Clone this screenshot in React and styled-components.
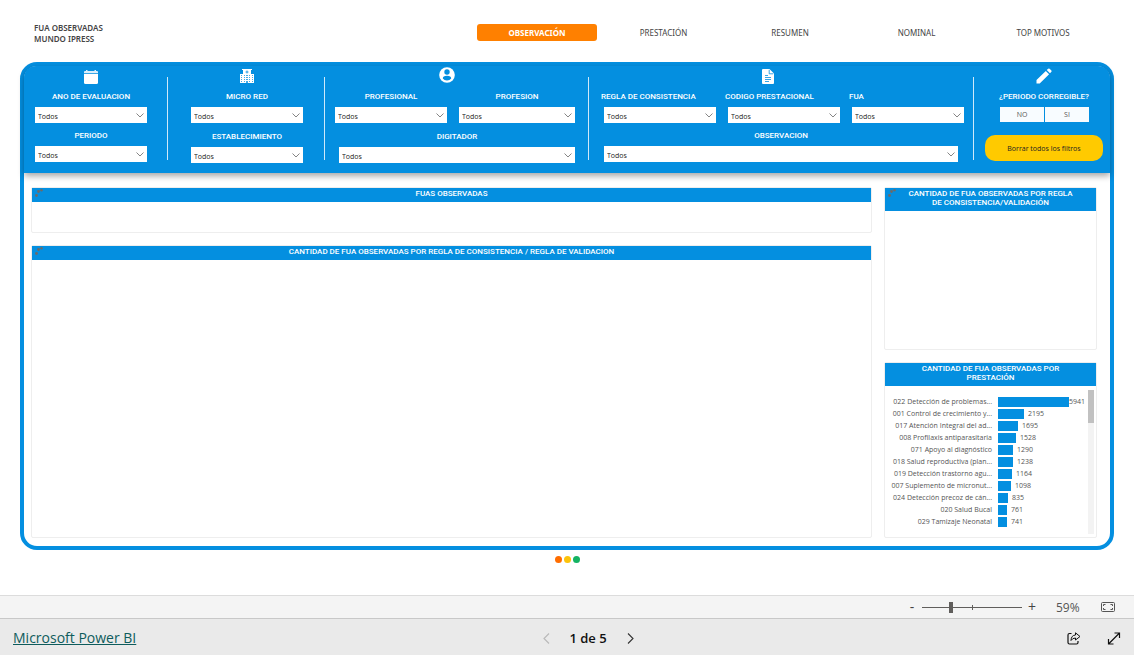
import { useState } from "react"
import styled, { createGlobalStyle } from "styled-components"

const BLUE = "#048fe0"

const todos = ["Todos"]

const prestaciones = [
  { name: "022 Detección de problemas...", total: 5941 },
  { name: "001 Control de crecimiento y...", total: 2195 },
  { name: "017 Atención Integral del ad...", total: 1695 },
  { name: "008 Profilaxis antiparasitaria", total: 1528 },
  { name: "071 Apoyo al diagnóstico", total: 1290 },
  { name: "018 Salud reproductiva (plan...", total: 1238 },
  { name: "019 Detección trastorno agu...", total: 1164 },
  { name: "007 Suplemento de micronut...", total: 1098 },
  { name: "024 Detección precoz de cán...", total: 835 },
  { name: "020 Salud Bucal", total: 761 },
  { name: "029 Tamizaje Neonatal", total: 741 }
]

const maxTotal = prestaciones[0].total

const tabs = ["OBSERVACIÓN", "PRESTACIÓN", "RESUMEN", "NOMINAL", "TOP MOTIVOS"]

export default function App() {
  const [tab, setTab] = useState(tabs[0])
  const [zoom, setZoom] = useState(59)

  return (
    <Page>
      <GlobalStyle />
      <Report>
        <Header>
          <Title>
            FUA OBSERVADAS
            <br />
            MUNDO IPRESS
          </Title>
          <Tabs>
            {tabs.map(t => (
              <Tab key={t} $active={t === tab} onClick={() => setTab(t)}>
                {t}
              </Tab>
            ))}
          </Tabs>
        </Header>
        <Card>
          <Filters />
          <Board>
            <Column>
              <Panel>
                <PanelTitle>
                  FUAS OBSERVADAS
                  <DrillMark />
                </PanelTitle>
                <PanelBody $height={30} />
              </Panel>
              <Panel $grow>
                <PanelTitle>
                  CANTIDAD DE FUA OBSERVADAS POR REGLA DE CONSISTENCIA / REGLA
                  DE VALIDACION
                  <DrillMark />
                </PanelTitle>
                <PanelBody $height={277} />
              </Panel>
            </Column>
            <Column>
              <Panel>
                <PanelTitle>
                  CANTIDAD DE FUA OBSERVADAS POR REGLA
                  <br />
                  DE CONSISTENCIA/VALIDACIÓN
                  <DrillMark />
                </PanelTitle>
                <PanelBody $height={138} />
              </Panel>
              <Panel $grow>
                <PanelTitle>
                  CANTIDAD DE FUA OBSERVADAS POR
                  <br />
                  PRESTACIÓN
                </PanelTitle>
                <PanelBody $height={151}>
                  <Chart />
                </PanelBody>
              </Panel>
            </Column>
          </Board>
        </Card>
        <Dots>
          <Dot $color="#ff6d00" />
          <Dot $color="#fcc30b" />
          <Dot $color="#14b363" />
        </Dots>
      </Report>
      <ZoomBar>
        <ZoomStep
          aria-label="Alejar"
          onClick={() => setZoom(Math.max(10, zoom - 10))}
        >
          -
        </ZoomStep>
        <ZoomRange
          type="range"
          aria-label="Zoom"
          min="36"
          max="118"
          value={zoom}
          onChange={e => setZoom(Number(e.target.value))}
        />
        <ZoomStep
          aria-label="Acercar"
          onClick={() => setZoom(Math.min(400, zoom + 10))}
        >
          +
        </ZoomStep>
        <ZoomValue>{zoom}%</ZoomValue>
        <IconButton aria-label="Ajustar a la página">
          <FitIcon />
        </IconButton>
      </ZoomBar>
      <Footer>
        <Brand href="#">Microsoft Power BI</Brand>
        <Pager>
          <IconButton aria-label="Página anterior" disabled>
            <Arrow d="M8 1.500 3 6.500l5 5" color="#b8b8b8" />
          </IconButton>
          <PageLabel>1 de 5</PageLabel>
          <IconButton aria-label="Página siguiente">
            <Arrow d="m3 1.500 5 5-5 5" color="#333" />
          </IconButton>
        </Pager>
        <FooterTools>
          <IconButton aria-label="Compartir">
            <ShareIcon />
          </IconButton>
          <IconButton aria-label="Pantalla completa">
            <FullIcon />
          </IconButton>
        </FooterTools>
      </Footer>
    </Page>
  )
}

const Filters = () => (
  <FilterBar>
    <Group $left={11} $right={20}>
      <GroupIcon>
        <CalendarIcon />
      </GroupIcon>
      <Field id="ano" label="ANO DE EVALUACION" />
      <Field id="periodo" label="PERIODO" />
    </Group>
    <Divider />
    <Group $left={23} $right={21} $gap={1}>
      <GroupIcon>
        <HospitalIcon />
      </GroupIcon>
      <Field id="red" label="MICRO RED" />
      <Field id="establecimiento" label="ESTABLECIMIENTO" />
    </Group>
    <Divider />
    <Group $left={10} $right={13} $gap={1}>
      <GroupIcon $shift={16}>
        <UserIcon />
      </GroupIcon>
      <FieldRow $gap={12}>
        <Field id="profesional" label="PROFESIONAL" size={112} />
        <Field id="profesion" label="PROFESION" size={116} />
      </FieldRow>
      <Field id="digitador" label="DIGITADOR" left={4} />
    </Group>
    <Divider />
    <Group $left={12} $right={9}>
      <GroupIcon $shift={30}>
        <DocumentIcon />
      </GroupIcon>
      <FieldRow $gap={9}>
        <Field id="regla" label="REGLA DE CONSISTENCIA" start left={3} />
        <Field id="codigo" label="CODIGO PRESTACIONAL" start left={3} />
        <Field id="fua" label="FUA" start left={3} />
      </FieldRow>
      <Field id="observacion" label="OBSERVACION" left={3} right={6} />
    </Group>
    <Divider />
    <Group $left={11} $right={7}>
      <GroupIcon>
        <PencilIcon />
      </GroupIcon>
      <Question>¿PERIODO CORREGIBLE?</Question>
      <Choices>
        <Choice type="button">NO</Choice>
        <Choice type="button">SI</Choice>
      </Choices>
      <ClearButton type="reset">Borrar todos los filtros</ClearButton>
    </Group>
  </FilterBar>
)

const Field = ({ id, label, start, left, right, size }) => (
  <FieldBox $left={left} $right={right} $size={size}>
    <FieldLabel htmlFor={id} $start={start}>
      {label}
    </FieldLabel>
    <SelectBox>
      <Select id={id}>
        {todos.map(o => (
          <option key={o}>{o}</option>
        ))}
      </Select>
      <Chevron viewBox="0 0 8 5">
        <path d="M.5.5 4 4 7.500.5" fill="none" stroke="#666" strokeWidth=".8" />
      </Chevron>
    </SelectBox>
  </FieldBox>
)

const Chart = () => (
  <ChartBox>
    <Rows>
      {prestaciones.map(p => (
        <Row key={p.name}>
          <RowName>{p.name}</RowName>
          <RowTrack>
            <Bar style={{ width: Math.round((p.total / maxTotal) * 71) }} />
            <BarGap />
            <RowValue>{p.total}</RowValue>
          </RowTrack>
        </Row>
      ))}
    </Rows>
    <Scroll>
      <Thumb />
    </Scroll>
  </ChartBox>
)

/* - - - Icons - - - */

const CalendarIcon = () => (
  <svg width="14" height="14" viewBox="0 0 14 14" fill="#fff">
    <path d="M0 3.200V2Q0 1 1 1h1V0h1.500v1h7V0H12v1h1q1 0 1 1v1.200z" fillOpacity=".85" />
    <path d="M0 4h14v8.500Q14 14 12.500 14h-11Q0 14 0 12.500z" />
  </svg>
)

const HospitalIcon = () => (
  <svg width="14" height="14" viewBox="0 0 14 14">
    <path d="M2 0h10v1h-1v4h3v9H0V5h3V1H2z" fill="#fff" />
    <path
      d="M1 6h1v1H1zM1 8h1v1H1zM1 10h1v1H1zM1 12h1v1H1zM12 6h1v1h-1zM12 8h1v1h-1zM12 10h1v1h-1zM12 12h1v1h-1zM4 6h1v1H4zM4 8h1v1H4zM4 10h1v1H4zM4 12h1v1H4zM9 6h1v1H9zM9 8h1v1H9zM9 10h1v1H9zM9 12h1v1H9zM6 6h2v1H6zM6 8h2v1H6zM6 10h2v1H6zM6 12h2v2H6z"
      fill={BLUE}
      fillOpacity=".75"
    />
    <path d="M7 1.500v3M5.500 3h3" stroke={BLUE} strokeWidth=".8" />
  </svg>
)

const UserIcon = () => (
  <svg width="16" height="16" viewBox="0 0 16 16">
    <circle cx="8" cy="8" r="7.800" fill="#fff" />
    <circle cx="8" cy="5" r="2.700" fill={BLUE} />
    <path d="M3.800 11.500Q3.800 8.800 8 8.800t4.200 2.700Q10.800 13.600 8 13.600t-4.200-2.100z" fill={BLUE} />
  </svg>
)

const DocumentIcon = () => (
  <svg width="12" height="15" viewBox="0 0 12 15">
    <path d="M0 1Q0 0 1 0h6.500L12 4.500V14q0 1-1 1H1q-1 0-1-1z" fill="#fff" />
    <path
      d="M7.200.8v4h4M3 6.500h3M3 8.500h6M3 10.500h6M3 12.500h4"
      fill="none"
      stroke={BLUE}
      strokeWidth=".8"
    />
  </svg>
)

const PencilIcon = () => (
  <svg width="16" height="16" viewBox="0 0 16 16" fill="#fff">
    <path d="M.5 15.500V12L9.800 3l3.300 3.200-9.400 9.300zM10.700 2.100 12.200.7q.7-.6 1.400 0l1.800 1.800q.5.700 0 1.300L14 5.300z" />
  </svg>
)

const DrillMark = () => (
  <Mark viewBox="0 0 8 8" fill="#6e6a68">
    <circle cx="1.500" cy="6.500" r="1.400" />
    <circle cx="3.500" cy="2.500" r="1.400" />
    <circle cx="6.500" cy="1.200" r="1.200" />
  </Mark>
)

const Arrow = ({ d, color }) => (
  <svg width="10" height="13" viewBox="0 0 10 13">
    <path d={d} fill="none" stroke={color} strokeWidth="1.100" />
  </svg>
)

const FitIcon = () => (
  <svg width="14" height="10" viewBox="0 0 14 10" fill="none" stroke="#555">
    <rect x=".5" y=".5" width="13" height="9" rx="1" />
    <path d="M2.500 4V2.500H4.500M9.500 2.500h2V4M2.500 6v1.500h2M9.500 7.500h2V6" />
  </svg>
)

const ShareIcon = () => (
  <svg width="14" height="13" viewBox="0 0 14 13" fill="none" stroke="#111">
    <path d="M4.500 1.500H2.500q-1.500 0-1.500 1.500v7.500Q1 12 2.500 12h7q1.500 0 1.500-1.500V9" strokeWidth="1.200" />
    <path d="M8.500.8 13 4.500 8.500 8V6Q5.500 6 4 8.500 4.200 3.300 8.500 3z" />
  </svg>
)

const FullIcon = () => (
  <svg width="14" height="13" viewBox="0 0 14 13" fill="none" stroke="#111">
    <path d="M1.500 12 12.500 1M7.500 1h5v5M1.500 7v5h5" strokeWidth="1.200" />
  </svg>
)

/* - - - Page - - - */

const GlobalStyle = createGlobalStyle`
  * {
    box-sizing: border-box;
  }
  body {
    margin: 0;
    background: #fff;
    font-family: "Open Sans", "Noto Sans", sans-serif;
  }
  button, select, input {
    font-family: inherit;
    margin: 0;
  }
  svg {
    display: block;
  }
`

const Page = styled.div`
  min-height: 100vh;
  display: flex;
  flex-direction: column;
`

const Report = styled.main`
  flex: 1;
  padding: 0 20px;
`

const Header = styled.header`
  height: 62px;
  display: flex;
  justify-content: space-between;
  padding: 22px 11px 0 14px;
  font-family: "Noto Sans", sans-serif;
`

const Title = styled.h1`
  margin: 0;
  font-size: 8px;
  font-weight: 600;
  line-height: 11px;
  color: #444;
`

const Tabs = styled.nav`
  display: flex;
  flex: 0 1 626px;
  justify-content: space-between;
  padding-top: 2px;
`

const Tab = styled.button`
  width: 120px;
  height: 17px;
  padding: 0;
  border: 0;
  border-radius: 3px;
  font-size: 8px;
  line-height: 17px;
  font-weight: ${p => (p.$active ? 700 : 400)};
  color: ${p => (p.$active ? "#fff" : "#444")};
  background: ${p => (p.$active ? "#ff8000" : "transparent")};
`

const Card = styled.section`
  border: 4px solid ${BLUE};
  border-radius: 17px;
`

/* - - - Filters - - - */

const FilterBar = styled.form`
  display: grid;
  grid-template-columns: 143fr 1px 156fr 1px 263fr 1px 384fr 1px 136fr;
  min-height: 107px;
  background: ${BLUE};
  border-radius: 12px 12px 0 0;
  box-shadow: 0 3px 6px rgba(0, 0, 0, 0.35);
`

const Group = styled.div`
  min-width: 0;
  display: grid;
  align-content: start;
  row-gap: ${p => p.$gap || 0}px;
  padding: ${p => (p.$gap ? 1 : 2)}px ${p => p.$right}px 10px ${p => p.$left}px;
`

const GroupIcon = styled.div`
  height: 16px;
  display: flex;
  align-items: flex-end;
  justify-content: center;
  padding-right: ${p => p.$shift || 0}px;
`

const Divider = styled.div`
  height: 83px;
  margin-top: 11px;
  background: #cfe9fa;
`

const FieldRow = styled.div`
  display: flex;
  gap: ${p => p.$gap}px;
`

const FieldBox = styled.div`
  flex: ${p => p.$size || 1} 1 0;
  min-width: 0;
  padding-left: ${p => p.$left || 0}px;
  padding-right: ${p => p.$right || 0}px;
`

const FieldLabel = styled.label`
  display: block;
  height: 23px;
  margin-left: ${p => (p.$start ? -3 : 0)}px;
  font-family: Roboto, sans-serif;
  font-size: 8px;
  font-weight: 500;
  line-height: 25px;
  text-align: ${p => (p.$start ? "left" : "center")};
  white-space: nowrap;
  color: #fff;
`

const SelectBox = styled.div`
  position: relative;
`

const Select = styled.select`
  display: block;
  width: 100%;
  height: 16px;
  appearance: none;
  padding: 3px 14px 0 3px;
  border: 0;
  border-radius: 0;
  background: #fff;
  color: #222;
  font-size: 7px;
  line-height: 12px;
`

const Chevron = styled.svg`
  position: absolute;
  right: 3px;
  top: 6px;
  width: 8px;
  height: 5px;
  pointer-events: none;
`

const Question = styled.div`
  padding-top: 3px;
  font-family: Roboto, sans-serif;
  font-size: 8px;
  font-weight: 500;
  line-height: 20px;
  text-align: center;
  color: #fff;
`

const Choices = styled.div`
  display: flex;
  gap: 1px;
  padding: 0 14px 0 15px;
`

const Choice = styled.button`
  flex: 1;
  height: 15px;
  padding: 0;
  border: 0;
  background: #f8fcff;
  color: #555;
  font-size: 7px;
`

const ClearButton = styled.button`
  height: 26px;
  margin-top: 13px;
  padding: 0;
  border: 0;
  border-radius: 10px;
  background: #ffca00;
  color: #222;
  font-size: 7px;
`

/* - - - Panels - - - */

const Board = styled.div`
  display: grid;
  grid-template-columns: 841fr 213fr;
  gap: 12px;
  padding: 14px 13px 8px 7px;
`

const Column = styled.div`
  display: flex;
  flex-direction: column;
  gap: 12px;
  min-width: 0;
`

const Panel = styled.section`
  display: flex;
  flex-direction: column;
  flex-grow: ${p => (p.$grow ? 1 : 0)};
  border: 1px solid #eee;
  border-radius: 2px;
`

const PanelTitle = styled.h2`
  position: relative;
  margin: 0;
  padding: 1px 8px 4px;
  background: ${BLUE};
  color: #fff;
  font-family: Roboto, sans-serif;
  font-size: 8px;
  font-weight: 500;
  line-height: 9px;
  text-align: center;
`

const PanelBody = styled.div`
  flex-grow: 1;
  min-height: ${p => p.$height}px;
`

const Mark = styled.svg`
  position: absolute;
  left: 3px;
  top: 1px;
  width: 8px;
  height: 8px;
`

/* - - - Chart - - - */

const ChartBox = styled.div`
  display: flex;
  justify-content: space-between;
  padding: 4px 2px 3px 4px;
`

const Rows = styled.div`
  flex: 1;
  min-width: 0;
  padding-top: 6px;
`

const Row = styled.div`
  display: flex;
  align-items: center;
  height: 12px;
  color: #555;
  font-size: 7px;
  line-height: 12px;
`

const RowName = styled.div`
  flex: 1;
  min-width: 0;
  padding-right: 6px;
  text-align: right;
  white-space: nowrap;
`

const RowTrack = styled.div`
  flex: none;
  width: 90px;
  display: flex;
  align-items: center;
  padding-right: 3px;
`

const Bar = styled.div`
  flex: none;
  height: 10px;
  background: ${BLUE};
`

const BarGap = styled.div`
  flex: 0 1 4px;
`

const RowValue = styled.div`
  flex: none;
`

const Scroll = styled.div`
  width: 6px;
  height: 144px;
  background: #f3f3f3;
`

const Thumb = styled.div`
  height: 33px;
  background: #c1c1c1;
`

const Dots = styled.div`
  display: flex;
  justify-content: center;
  gap: 2px;
  padding-top: 6px;
`

const Dot = styled.span`
  width: 7px;
  height: 7px;
  border-radius: 50%;
  background: ${p => p.$color};
`

/* - - - Bottom bars - - - */

const ZoomBar = styled.div`
  height: 23px;
  display: flex;
  align-items: center;
  justify-content: flex-end;
  padding-right: 19px;
  border-top: 1px solid #dcdcdc;
  background: #f4f4f4;
`

const ZoomStep = styled.button`
  width: 20px;
  padding: 0;
  border: 0;
  background: none;
  color: #444;
  font-size: 14px;
  line-height: 20px;
`

const ZoomRange = styled.input`
  appearance: none;
  width: 100px;
  height: 11px;
  background: linear-gradient(#605e5c, #605e5c) 50px 3px / 1px 5px no-repeat,
    linear-gradient(#605e5c, #605e5c) 0 5px / 100% 1px no-repeat;

  &::-webkit-slider-thumb {
    appearance: none;
    width: 4px;
    height: 11px;
    background: #605e5c;
  }
`

const ZoomValue = styled.span`
  width: 46px;
  padding-left: 14px;
  margin-right: 13px;
  color: #555;
  font-size: 12px;
`

const IconButton = styled.button`
  padding: 0;
  border: 0;
  background: none;
`

const Footer = styled.footer`
  display: grid;
  grid-template-columns: 1fr auto 1fr;
  align-items: center;
  height: 37px;
  padding: 2px 13px 0;
  border-top: 1px solid #c8c8c8;
  background: #eaeaea;
`

const Brand = styled.a`
  color: #0e5c5c;
  font-size: 14px;
  line-height: 20px;
`

const Pager = styled.div`
  display: flex;
  align-items: center;
  gap: 18px;
  padding-left: 42px;
`

const PageLabel = styled.span`
  font-size: 13px;
  font-weight: 600;
  color: #111;
`

const FooterTools = styled.div`
  display: flex;
  justify-content: flex-end;
  gap: 26px;
`
